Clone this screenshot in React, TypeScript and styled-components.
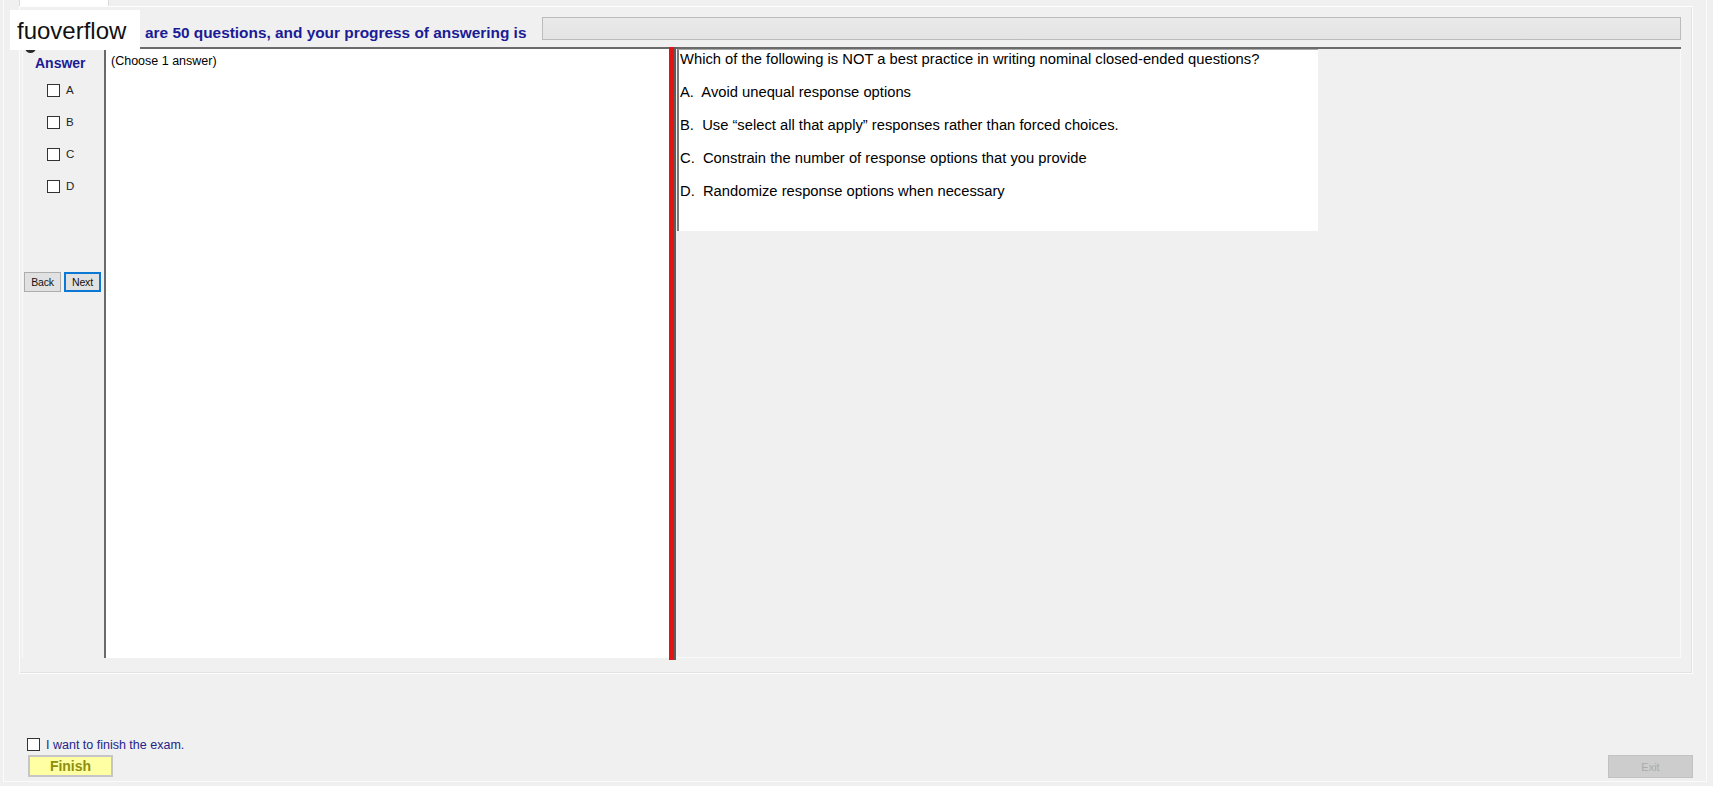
import React from "react";
import styled, { createGlobalStyle } from "styled-components";

const colors = {
  Bg: "#f0f0f0",
  Navy: "#1b1b96",
  Frame: "#fbfbfb",
  DarkEdge: "#6a6a6a",
  Splitter: "#e31313",
};

const GlobalStyle = createGlobalStyle`
  html, body {
    margin: 0;
    padding: 0;
    background: ${colors.Bg};
  }
  body {
    font-family: "Liberation Sans", Arial, sans-serif;
    color: #000;
  }
`;

const Screen = styled.div`
  position: relative;
  width: 1713px;
  height: 786px;
  overflow: hidden;
  background: ${colors.Bg};
`;

//window frame
const WindowS = styled.div`
  margin-left: 3px;
  width: 1702px;
  height: 781px;
  border: 1px solid ${colors.Frame};
  border-top: none;
  display: flex;
  flex-direction: column;
`;

const TabStrip = styled.div`
  height: 6px;
  display: flex;
  padding-left: 15px;
`;

const TabHead = styled.div`
  width: 88px;
  height: 6px;
  background: #fff;
  border: 1px solid #dadada;
  border-top: none;
  border-bottom: none;
`;

const TabPage = styled.div`
  margin-left: 15px;
  width: 1659px;
  height: 666px;
  border: 1px solid #fdfdfd;
  box-shadow: inset -1px -1px 0 #e2e2e2;
  padding: 0 11px 0 2px;
  box-sizing: content-box;
  display: flex;
  flex-direction: column;
`;

//header with progress
const HeaderS = styled.div`
  height: 40px;
  display: flex;
  align-items: flex-start;
`;

const ProgressLabel = styled.div`
  margin: 17px 0 0 123px;
  font-size: 15.4px;
  line-height: 18px;
  font-weight: bold;
  color: ${colors.Navy};
  white-space: nowrap;
`;

const ProgressBar = styled.div`
  margin: 10px 0 0 auto;
  width: 1137px;
  height: 21px;
  border: 1px solid #bcbcbc;
  background: linear-gradient(#e9e9e9, #e4e4e4);
`;

//main content
const ContentS = styled.div`
  height: 609px;
  display: flex;
  border-top: 2px solid ${colors.DarkEdge};
`;

const AnswerCol = styled.div`
  width: 81px;
  border-left: 1px solid #fafafa;
  display: flex;
  flex-direction: column;
`;

const AnswerTitle = styled.div`
  margin: 6px 0 0 12px;
  font-size: 14px;
  line-height: 16px;
  font-weight: bold;
  color: ${colors.Navy};
`;

const OptionList = styled.div`
  margin-top: 3px;
  display: flex;
  flex-direction: column;
`;

const OptionRow = styled.label`
  height: 32px;
  display: flex;
  align-items: center;
  padding-left: 24px;
  font-size: 11.5px;
  color: #222;
`;

const Box = styled.span<{ size?: number }>`
  display: inline-block;
  width: ${(props) => (props.size ? props.size : 13)}px;
  height: ${(props) => (props.size ? props.size : 13)}px;
  box-sizing: border-box;
  border: 1px solid #333;
  background: #fff;
  flex: none;
`;

const BoxText = styled.span`
  margin-left: 6px;
`;

const NavRow = styled.div`
  margin: 70px 0 0 1px;
  display: flex;
  gap: 3px;
`;

const NavButton = styled.button<{ focused?: boolean }>`
  width: 37px;
  height: 20px;
  padding: 0;
  box-sizing: border-box;
  font-family: "Liberation Sans", Arial, sans-serif;
  font-size: 10.5px;
  letter-spacing: -0.2px;
  color: #111;
  background: #e1e1e1;
  border: ${(props) => (props.focused ? "2px solid #0a78d4" : "1px solid #adadad")};
`;

const TextPanel = styled.div`
  width: 565px;
  background: #fff;
  border-left: 2px solid ${colors.DarkEdge};
  padding: 5px 5px;
  box-sizing: border-box;
  font-size: 12.5px;
  line-height: 15px;
`;

const Splitter = styled.div`
  width: 5px;
  margin-top: -2px;
  margin-bottom: -2px;
  background: ${colors.Splitter};
  border-right: 2px solid #5c5c5c;
`;

const QuestionPanel = styled.div`
  flex: 1;
  padding-left: 1px;
  border-right: 1px solid #fafafa;
  border-bottom: 1px solid #fafafa;
`;

const QuestionBox = styled.div`
  width: 641px;
  height: 182px;
  box-sizing: border-box;
  background: #fff;
  border-left: 2px solid #7a7a7a;
  border-top: 1px solid #a8a8a8;
  padding: 1px 0 0 1px;
  font-size: 14.75px;
  line-height: 17px;
`;

const OptionText = styled.div`
  margin-top: 16px;
  white-space: pre;
`;

//footer
const FooterS = styled.div`
  flex: 1;
  display: flex;
  flex-direction: column;
  justify-content: flex-end;
  padding: 0 13px 3px 23px;
`;

const FinishCheck = styled.label`
  height: 15px;
  display: flex;
  align-items: center;
  font-size: 12.5px;
  color: #24248a;
  margin-bottom: 3px;
`;

const ButtonRow = styled.div`
  height: 23px;
  display: flex;
  justify-content: space-between;
  align-items: flex-start;
`;

const FinishButton = styled.button`
  margin-left: 1px;
  width: 85px;
  height: 22px;
  padding: 0;
  font-family: "Liberation Sans", Arial, sans-serif;
  font-size: 14px;
  font-weight: bold;
  color: #8e8e0c;
  background: #ffffa4;
  border: 2px solid #c6c6c6;
`;

const ExitButton = styled.button`
  width: 85px;
  height: 23px;
  padding: 0;
  font-family: "Liberation Sans", Arial, sans-serif;
  font-size: 11px;
  color: #ababab;
  background: #cdcdcd;
  border: 1px solid #c2c2c2;
`;

//watermark overlay
const PeekDot = styled.div`
  position: absolute;
  left: 25px;
  top: 42px;
  width: 11px;
  height: 11px;
  border-radius: 50%;
  background: #2a2a2a;
`;

const Watermark = styled.div`
  position: absolute;
  left: 10px;
  top: 10px;
  width: 130px;
  height: 40px;
  box-sizing: border-box;
  padding: 3px 0 0 7px;
  background: #fff;
  font-size: 24px;
  line-height: 36px;
  color: #111;
`;

const options = [
  "A.  Avoid unequal response options",
  "B.  Use \u201cselect all that apply\u201d responses rather than forced choices.",
  "C.  Constrain the number of response options that you provide",
  "D.  Randomize response options when necessary",
];

export default function App() {
  return (
    <Screen>
      <GlobalStyle />
      <WindowS>
        <TabStrip>
          <TabHead />
        </TabStrip>
        <TabPage>
          <HeaderS>
            <ProgressLabel>are 50 questions, and your progress of answering is</ProgressLabel>
            <ProgressBar />
          </HeaderS>
          <ContentS>
            <AnswerCol>
              <AnswerTitle>Answer</AnswerTitle>
              <OptionList>
                {["A", "B", "C", "D"].map((l) => (
                  <OptionRow key={l}>
                    <Box />
                    <BoxText>{l}</BoxText>
                  </OptionRow>
                ))}
              </OptionList>
              <NavRow>
                <NavButton>Back</NavButton>
                <NavButton focused>Next</NavButton>
              </NavRow>
            </AnswerCol>
            <TextPanel>(Choose 1 answer)</TextPanel>
            <Splitter />
            <QuestionPanel>
              <QuestionBox>
                <div>Which of the following is NOT a best practice in writing nominal closed-ended questions?</div>
                {options.map((o) => (
                  <OptionText key={o}>{o}</OptionText>
                ))}
              </QuestionBox>
            </QuestionPanel>
          </ContentS>
        </TabPage>
        <FooterS>
          <FinishCheck>
            <Box />
            <BoxText>I want to finish the exam.</BoxText>
          </FinishCheck>
          <ButtonRow>
            <FinishButton>Finish</FinishButton>
            <ExitButton>Exit</ExitButton>
          </ButtonRow>
        </FooterS>
      </WindowS>
      <PeekDot />
      <Watermark>fuoverflow</Watermark>
    </Screen>
  );
}
